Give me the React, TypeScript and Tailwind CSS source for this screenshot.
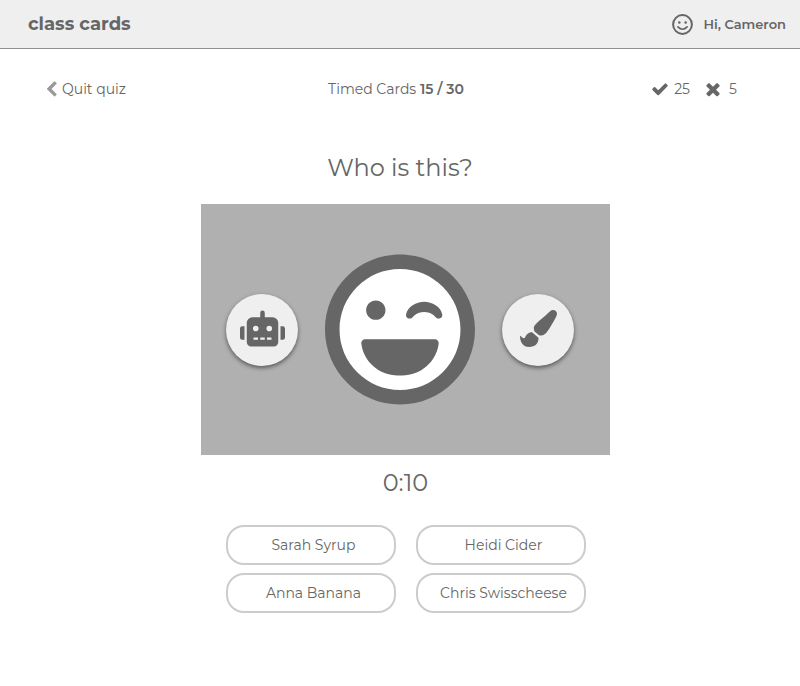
import type { ReactNode } from "react";
import { FaPaintBrush, FaRegLaughWink, FaRobot } from "react-icons/fa";

const answers = ["Sarah Syrup", "Heidi Cider", "Anna Banana", "Chris Swisscheese"];

const CHEVRON =
  "M1427 301l-531 531 531 531q19 19 19 45t-19 45l-166 166q-19 19-45 19t-45-19l-742-742q-19-19-19-45t19-45l742-742q19-19 45-19t45 19l166 166q19 19 19 45t-19 45z";
const CHECK =
  "M1671 566q0 40-28 68l-724 724-136 136q-28 28-68 28t-68-28l-136-136-362-362q-28-28-28-68t28-68l136-136q28-28 68-28t68 28l294 295 656-657q28-28 68-28t68 28l136 136q28 28 28 68z";
const CROSS =
  "M1490 1322q0 40-28 68l-136 136q-28 28-68 28t-68-28l-294-294-294 294q-28 28-68 28t-68-28l-136-136q-28-28-28-68t28-68l294-294-294-294q-28-28-28-68t28-68l136-136q28-28 68-28t68 28l294 294 294-294q28-28 68-28t68 28l136 136q28 28 28 68t-28 68l-294 294 294 294q28 28 28 68z";

function Glyph({ d, className }: { d: string; className: string }) {
  return (
    <svg viewBox="0 0 1792 1792" fill="currentColor" aria-hidden="true" className={className}>
      <path d={d} />
    </svg>
  );
}

function Smile() {
  return (
    <svg viewBox="0 0 21 21" fill="none" stroke="currentColor" aria-hidden="true" className="size-[21px]">
      <circle cx="10.5" cy="10.5" r="9.4" strokeWidth="2" />
      <circle cx="7.3" cy="8.5" r="1.3" fill="currentColor" stroke="none" />
      <circle cx="13.7" cy="8.5" r="1.3" fill="currentColor" stroke="none" />
      <path d="M5.9 12.9Q10.5 17.6 15.1 12.9" strokeWidth="1.7" strokeLinecap="round" />
    </svg>
  );
}

function RoundButton({ label, children }: { label: string; children: ReactNode }) {
  return (
    <button
      type="button"
      aria-label={label}
      className="flex size-[72px] items-center justify-center rounded-full bg-[#efefef] pb-0.5 shadow-[0_2px_4px_rgba(0,0,0,0.5)]"
    >
      {children}
    </button>
  );
}

export default function App() {
  return (
    <div className="min-h-screen bg-white font-['Montserrat','Inter',sans-serif] text-sm text-[#666]">
      <header className="flex h-[49px] items-center justify-between border-b border-[#8f8f8f] bg-[#efefef] pr-[14px] pl-7">
        <h1 className="text-lg font-bold">class cards</h1>
        <div className="flex items-center gap-[10px] text-[13px] font-semibold">
          <Smile />
          <span>Hi, Cameron</span>
        </div>
      </header>

      <main>
        <div className="grid grid-cols-3 items-center pt-[30px] pr-[51px] pl-[43px]">
          <a href="#quit" className="flex items-center gap-[2px]">
            <Glyph d={CHEVRON} className="size-[17px] text-[#999]" />
            Quit quiz
          </a>
          <p className="text-center">
            Timed Cards <strong className="font-semibold">15 / 30</strong>
          </p>
          <div className="flex items-center justify-end gap-[13px] pr-3">
            <span className="flex items-center gap-[5px]">
              <Glyph d={CHECK} className="size-[18px]" />
              25
            </span>
            <span className="flex items-center gap-[6px]">
              <Glyph d={CROSS} className="size-5" />5
            </span>
          </div>
        </div>

        <h2 className="mt-[53px] text-center text-2xl leading-8">Who is this?</h2>

        <section className="mt-5 flex flex-col items-center pl-[11px]">
          <div className="flex h-[251px] w-[409px] items-center gap-[27px] bg-[#b0b0b0] pl-[25px]">
            <RoundButton label="Robot avatar">
              <FaRobot size={45} />
            </RoundButton>
            <FaRegLaughWink className="h-[155px] w-[150px] bg-[radial-gradient(white_62%,transparent_62%)]" />
            <RoundButton label="Paint avatar">
              <FaPaintBrush size={37} />
            </RoundButton>
          </div>
          <p role="timer" className="mt-3 text-2xl leading-8">
            0:10
          </p>
          <div className="mt-[26px] grid w-[360px] grid-cols-2 gap-x-5 gap-y-2">
            {answers.map((name) => (
              <button
                key={name}
                type="button"
                className="h-10 rounded-[18px] border-2 border-[#ccc] pl-1.5 text-center"
              >
                {name}
              </button>
            ))}
          </div>
        </section>
      </main>
    </div>
  );
}
